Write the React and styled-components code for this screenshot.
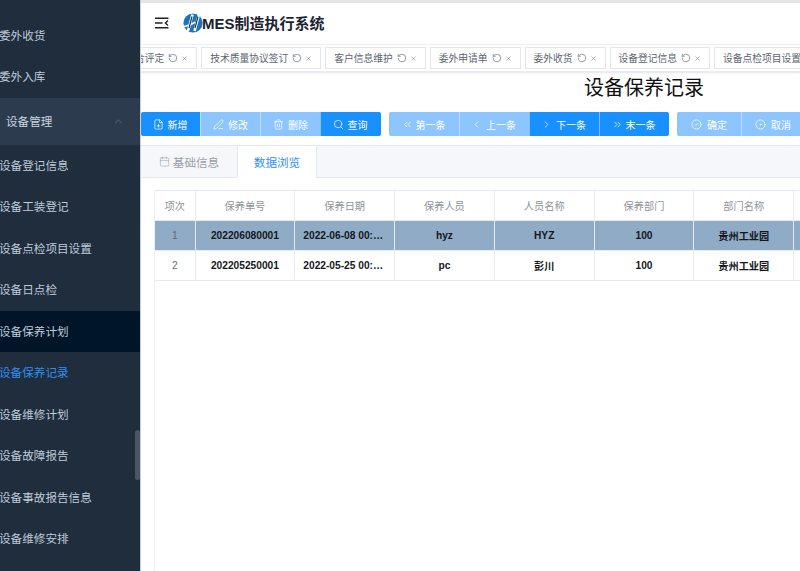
import React from 'react'
import styled, { createGlobalStyle } from 'styled-components'
import {
  ChevronUp, RotateCw, X, FilePlus, PenLine, Trash2, Search,
  ChevronsLeft, ChevronLeft, ChevronRight, ChevronsRight, CircleCheck, CircleDot, Calendar
} from 'lucide-react'

const font = `"Liberation Sans", "Noto Sans CJK SC", sans-serif`

const GlobalStyle = createGlobalStyle`
  html, body { margin: 0; padding: 0; height: 100%; overflow: hidden; background: #fff; }
  * { box-sizing: border-box; }
  body { font-family: ${font}; }
`

const Layout = styled.div`
  display: flex;
  width: 800px;
  height: 571px;
  overflow: hidden;
`

const Sidebar = styled.aside`
  position: relative;
  flex: 0 0 141px;
  background: #1f2d3d;
  border-right: 1px solid #c9ced6;
  padding-top: 14.5px;
  overflow: hidden;
`

const MenuItem = styled.div`
  height: 41.5px;
  line-height: 41.5px;
  margin-left: -1px;
  font-size: 11.6px;
  white-space: nowrap;
  color: ${(p) => (p.$active ? '#2f8fef' : '#bfcbd9')};
  background: ${(p) => (p.$dark ? '#001528' : 'transparent')};
`

const MenuGroup = styled.div`
  display: flex;
  align-items: center;
  justify-content: space-between;
  height: 47px;
  padding: 0 15px 0 6px;
  background: #2d3b4f;
  color: #cbd5e0;
  font-size: 11.6px;
  svg { color: #6f7c8c; }
`

const ScrollThumb = styled.div`
  position: absolute;
  right: 0;
  top: 430px;
  width: 5px;
  height: 50px;
  border-radius: 3px;
  background: #4a5665;
`

const Main = styled.main`
  flex: 1;
  min-width: 0;
  display: flex;
  flex-direction: column;
  border-top: 3px solid #e6e6e6;
`

const Header = styled.header`
  display: flex;
  align-items: center;
  height: 41px;
  padding: 0 0 2px 14px;
  gap: 14px;
  flex: none;
`

const Brand = styled.div`
  display: flex;
  align-items: center;
  font-size: 15px;
  font-weight: 700;
  color: #1b2330;
  svg { margin-right: -1px; }
`

const TagBar = styled.div`
  display: flex;
  align-items: center;
  gap: 4px;
  height: 29px;
  flex: none;
  overflow: hidden;
  background: #fff;
  border-top: 1px solid #f0f1f4;
  border-bottom: 2px solid #e9ebf0;
  box-shadow: 0 1px 2px rgba(0, 0, 0, 0.04);
`

const Tag = styled.div`
  display: flex;
  flex: none;
  align-items: center;
  height: 22px;
  padding: 0 8px;
  margin-left: ${(p) => p.$offset || 0};
  border: 1px solid #e2e5ec;
  font-size: 9.75px;
  color: #5c6470;
  white-space: nowrap;
  svg { flex: none; }
  span { margin-right: 4px; }
  svg + svg { margin-left: 3px; }
`

const Title = styled.h1`
  margin: 0;
  height: 39px;
  flex: none;
  padding: 2px 0 0 443px;
  font-size: 20px;
  line-height: 26px;
  font-weight: 400;
  color: #111;
  white-space: nowrap;
`

const Toolbar = styled.div`
  display: flex;
  gap: 8px;
  height: 24px;
  flex: none;
`

const ButtonGroup = styled.div`
  display: flex;
  flex: none;
  border-radius: 2px;
  overflow: hidden;
`

const ToolButton = styled.button`
  display: flex;
  align-items: center;
  justify-content: center;
  gap: ${(p) => p.$gap || '4px'};
  width: ${(p) => p.$w};
  height: 24px;
  padding: 0 ${(p) => p.$shift || '0'} 0 0;
  border: 0;
  border-left: 1px solid ${(p) => (p.$first ? 'transparent' : 'rgba(255, 255, 255, 0.45)')};
  background: ${(p) => (p.$off ? '#8cc5ff' : '#1890ff')};
  color: #fff;
  font-family: ${font};
  font-size: 10px;
`

const Tabs = styled.div`
  display: flex;
  height: 33px;
  flex: none;
  margin-top: 9px;
  background: #f5f7fa;
  border-top: 1px solid #e4e7ed;
  border-bottom: 1px solid #e4e7ed;
`

const Tab = styled.div`
  display: flex;
  align-items: center;
  justify-content: center;
  gap: 3px;
  height: ${(p) => (p.$active ? '32px' : '31px')};
  width: ${(p) => p.$w};
  font-size: 11.6px;
  color: ${(p) => (p.$active ? '#2f8fef' : '#9aa0a8')};
  background: ${(p) => (p.$active ? '#fff' : 'transparent')};
  border-left: ${(p) => (p.$active ? '1px solid #e4e7ed' : '0')};
  border-right: ${(p) => (p.$active ? '1px solid #e4e7ed' : '0')};
`

const Panel = styled.div`
  flex: 1;
  min-height: 0;
  padding: 11.5px 0 0 13px;
  overflow: hidden;
`

const TableFrame = styled.div`
  height: 100%;
  width: 660px;
  border-left: 1px solid #ebeef5;
`

const Grid = styled.table`
  border-collapse: collapse;
  table-layout: fixed;
  width: 739px;
  font-size: 10.2px;
  border-top: 1px solid #e6e9f0;
`

const HeadCell = styled.th`
  height: 30px;
  padding: 0 5px;
  width: ${(p) => p.$w || '99.7px'};
  font-weight: 400;
  color: #8f9399;
  border: 1px solid #e6e9f0;
  border-top: 0;
  border-left: 0;
`

const Row = styled.tr`
  background: ${(p) => (p.$selected ? '#90abc6' : '#fff')};
`

const Cell = styled.td`
  height: 30px;
  padding: 0 8px;
  text-align: center;
  font-weight: ${(p) => (p.$index ? 400 : 700)};
  color: ${(p) => (p.$index ? '#5f6b78' : '#14181d')};
  border: 1px solid #e6e9f0;
  border-left: 0;
  white-space: nowrap;
  overflow: hidden;
  text-overflow: ellipsis;
`

const upperMenu = ['委外收货', '委外入库']
const lowerMenu = [
  '设备登记信息', '设备工装登记', '设备点检项目设置', '设备日点检', '设备保养计划',
  '设备保养记录', '设备维修计划', '设备故障报告', '设备事故报告信息', '设备维修安排'
]

const tags = ['合评定', '技术质量协议签订', '客户信息维护', '委外申请单', '委外收货', '设备登记信息', '设备点检项目设置']

const columns = ['保养单号', '保养日期', '保养人员', '人员名称', '保养部门', '部门名称']
const rows = [
  ['202206080001', '2022-06-08 00:00:00', 'hyz', 'HYZ', '100', '贵州工业园'],
  ['202205250001', '2022-05-25 00:00:00', 'pc', '彭川', '100', '贵州工业园']
]

const MenuFoldIcon = () => (
  <svg width="14" height="12" viewBox="0 0 14 12" fill="none" stroke="#222" strokeWidth="1.4">
    <path d="M0 1.2h13.5M0 6h7.5M0 10.8h13.5M13 3.6L10.4 6l2.6 2.4" />
  </svg>
)

const Logo = () => (
  <svg width="20" height="20" viewBox="0 0 20 20" fill="none">
    <circle cx="10" cy="10" r="9.6" fill="#1e73bb" />
    <path d="M1 13.5C4 13 9 11.5 12.5 9" stroke="#fff" strokeWidth="1.6" />
    <path d="M9.5 1.5L5 18M16 1.5L11.5 18" stroke="#fff" strokeWidth="2.6" />
    <path d="M9 3.5L6 15M15 3.5L12 15" stroke="#16395c" strokeWidth="1.2" />
  </svg>
)

const toolGroups = [
  [
    { label: '新增', Icon: FilePlus, w: '59px', shift: '2px' },
    { label: '修改', Icon: PenLine, w: '60px', off: true },
    { label: '删除', Icon: Trash2, w: '60px', off: true },
    { label: '查询', Icon: Search, w: '61px', shift: '2px' }
  ],
  [
    { label: '第一条', Icon: ChevronsLeft, w: '70px', off: true, gap: '3px', shift: '2px' },
    { label: '上一条', Icon: ChevronLeft, w: '70px', off: true, gap: '4px', shift: '2px' },
    { label: '下一条', Icon: ChevronRight, w: '70px', gap: '4px', shift: '2px' },
    { label: '末一条', Icon: ChevronsRight, w: '70px', gap: '3px', shift: '2px' }
  ],
  [
    { label: '确定', Icon: CircleCheck, w: '64px', off: true, gap: '5px', shift: '1px' },
    { label: '取消', Icon: CircleDot, w: '64px', off: true, gap: '5px', shift: '1px' }
  ]
]

export default function App() {
  return (
    <Layout>
      <GlobalStyle />
      <Sidebar>
        {upperMenu.map((m) => <MenuItem key={m}>{m}</MenuItem>)}
        <MenuGroup>
          <span>设备管理</span>
          <ChevronUp size={13} strokeWidth={1.2} />
        </MenuGroup>
        {lowerMenu.map((m) => (
          <MenuItem key={m} $dark={m === '设备保养计划'} $active={m === '设备保养记录'}>{m}</MenuItem>
        ))}
        <ScrollThumb />
      </Sidebar>
      <Main>
        <Header>
          <MenuFoldIcon />
          <Brand><Logo />MES制造执行系统</Brand>
        </Header>
        <TagBar>
          {tags.map((t, i) => (
            <Tag key={t} $offset={i === 0 ? '-15px' : 0}>
              <span>{t}</span>
              <RotateCw size={10} strokeWidth={1.5} style={{ transform: 'scaleX(-1)' }} />
              <X size={7} strokeWidth={1.5} />
            </Tag>
          ))}
        </TagBar>
        <Title>设备保养记录</Title>
        <Toolbar>
          {toolGroups.map((group, g) => (
            <ButtonGroup key={g}>
              {group.map(({ label, Icon, w, off, gap, shift }, i) => (
                <ToolButton key={label} $w={w} $off={off} $gap={gap} $shift={shift} $first={i === 0}>
                  <Icon size={11} strokeWidth={1.6} />
                  {label}
                </ToolButton>
              ))}
            </ButtonGroup>
          ))}
        </Toolbar>
        <Tabs>
          <Tab $w="96px"><Calendar size={11} strokeWidth={1.2} />基础信息</Tab>
          <Tab $w="80px" $active>数据浏览</Tab>
        </Tabs>
        <Panel>
          <TableFrame>
            <Grid>
              <thead>
                <tr>
                  <HeadCell $w="40px">项次</HeadCell>
                  {columns.map((c) => <HeadCell key={c}>{c}</HeadCell>)}
                  <HeadCell />
                </tr>
              </thead>
              <tbody>
                {rows.map((r, i) => (
                  <Row key={r[0]} $selected={i === 0}>
                    <Cell $index>{i + 1}</Cell>
                    {r.map((v, j) => <Cell key={j}>{v}</Cell>)}
                    <Cell />
                  </Row>
                ))}
              </tbody>
            </Grid>
          </TableFrame>
        </Panel>
      </Main>
    </Layout>
  )
}
